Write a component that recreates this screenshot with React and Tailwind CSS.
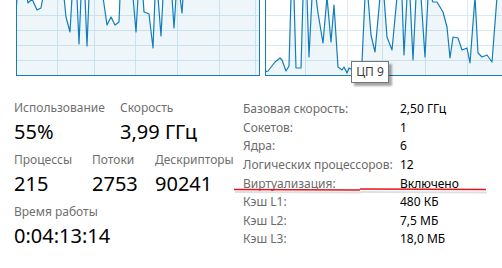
import React from 'react'

const graphOne = [
  [16, 15], [17, -3], [27, -3], [28, 3], [32, -1], [37, 10], [41, 8], [43, -3],
  [64, -3], [66, 17], [70, 32], [72, -3],
  [77, -3], [79, 44], [81, -3],
  [85, -3], [87, 46], [89, -3],
  [103, -3], [107, 25], [111, 17], [115, 25], [119, 22], [120, -3],
  [133, -3], [136, 32], [138, -3],
  [143, -3], [144, 12], [147, 13], [149, 14], [153, 48], [155, -3],
  [158, -3], [161, 36], [163, -3],
  [172, -3], [174, 28], [176, -3],
  [180, -3], [182, 13], [183, -3],
  [260, -3],
]

const graphTwo = [
  [265, 72], [268, 71], [275, 62], [280, 58], [282, 60], [286, 71], [289, 66], [291, -3],
  [294, -3], [296, 68], [301, 68], [303, -3], [307, -3], [309, 57], [312, -3],
  [316, -3], [318, 13], [323, 43], [327, -3], [331, 42], [334, 5], [338, 67],
  [342, 70], [344, 67], [347, 73], [349, 68], [354, 71], [358, 66], [362, 62], [365, -3],
  [368, -3], [371, 35], [375, 52], [380, -3], [384, -3], [387, 37], [392, 50], [397, -3],
  [402, -3], [404, 55], [407, -3], [410, -3], [413, 60], [416, -3], [421, -3], [425, 57],
  [428, -3], [431, -3], [433, 2], [437, 2], [443, 12], [447, 27], [450, 58], [453, 37],
  [458, 38], [462, 50], [467, 48], [470, 63], [475, -3], [478, 53], [482, 57], [487, 55],
  [492, 62], [497, -3], [502, -3],
]

const Graph = ({ x, width, points, vLines, rightBorder }) => {
  const line = points.map((p) => p.join(',')).join(' ')
  const area = `${points[0][0]},75 ${line} ${points[points.length - 1][0]},75`
  return (
    <svg width={width} height="76" viewBox={`${x} 0 ${width} 76`} className="block shrink-0">
      <rect x={x} y="0" width={width} height="76" fill="#ffffff" />
      {[15, 30, 45, 60].map((y) => (
        <line key={y} x1={x} x2={x + width} y1={y + 0.5} y2={y + 0.5} stroke="#d9eaf4" />
      ))}
      {vLines.map((v) => (
        <line key={v} x1={v + 0.5} x2={v + 0.5} y1="0" y2="75" stroke="#d9eaf4" />
      ))}
      <polygon points={area} fill="#117dbb" fillOpacity="0.07" />
      <polyline points={line} fill="none" stroke="#117dbb" strokeWidth="1.2" strokeLinejoin="round" />
      <line x1={x + 0.5} x2={x + 0.5} y1="0" y2="76" stroke="#117dbb" />
      {rightBorder && <line x1={x + width - 0.5} x2={x + width - 0.5} y1="0" y2="76" stroke="#117dbb" />}
      <line x1={x} x2={x + width} y1="75.5" y2="75.5" stroke="#117dbb" />
    </svg>
  )
}

const Stat = ({ label, value, className = '' }) => (
  <div className={className}>
    <div className="text-[12px] leading-[16px] text-[#6f6f6f]">{label}</div>
    <div className="mt-[3px] text-[20px] leading-[26px] text-black">{value}</div>
  </div>
)

const specs = [
  ['Базовая скорость:', '2,50 ГГц'],
  ['Сокетов:', '1'],
  ['Ядра:', '6'],
  ['Логических процессоров:', '12'],
  ['Виртуализация:', 'Включено'],
  ['Кэш L1:', '480 КБ'],
  ['Кэш L2:', '7,5 МБ'],
  ['Кэш L3:', '18,0 МБ'],
]

export default function App() {
  return (
    <div className="relative w-[502px] h-[268px] overflow-hidden bg-white font-['Noto_Sans',sans-serif]">
      {/* CPU graphs */}
      <div className="flex h-[76px]">
        <div className="ml-[16px]">
          <Graph x={16} width={244} points={graphOne} vLines={[57, 94, 135, 177, 219, 255]} rightBorder />
        </div>
        <div className="ml-[5px]">
          <Graph x={265} width={237} points={graphTwo} vLines={[305, 347, 382, 425, 467]} />
        </div>
      </div>

      <div className="flex pt-[24px]">
        <div className="w-[243px] pl-[14px]">
          <div className="flex">
            <Stat className="w-[106px]" label="Использование" value="55%" />
            <Stat label="Скорость" value="3,99 ГГц" />
          </div>
          <div className="mt-[7px] flex">
            <Stat className="w-[78px]" label="Процессы" value="215" />
            <Stat className="w-[63px]" label="Потоки" value="2753" />
            <Stat label="Дескрипторы" value="90241" />
          </div>
          <Stat className="mt-[7px]" label="Время работы" value="0:04:13:14" />
        </div>

        <div className="grid grid-cols-[157px_auto] text-[12px] leading-[18px]">
          {specs.map(([k, v]) => (
            <React.Fragment key={k}>
              <div className="text-[#6b6b6b]">{k}</div>
              <div className="text-black">{v}</div>
            </React.Fragment>
          ))}
        </div>
      </div>

      {/* tooltip */}
      <div className="absolute left-[351px] top-[61px] flex h-[22px] w-[38px] items-center justify-center border border-[#767676] bg-white text-[12px] text-[#3c3c3c] shadow-[3px_3px_2px_rgba(0,0,0,0.35)]">
        ЦП 9
      </div>

      {/* red underline */}
      <svg className="absolute left-0 top-0" width="502" height="268">
        <path d="M234 190 L360 190.5" stroke="#000" strokeOpacity="0.12" strokeWidth="2" fill="none" transform="translate(1 2)" />
        <path d="M360 190 L486 190.5" stroke="#000" strokeOpacity="0.12" strokeWidth="2" fill="none" transform="translate(1 2)" />
        <path d="M234 189.5 L360 190" stroke="#e5131d" strokeWidth="1.6" fill="none" />
        <path d="M360 189 L486 189.5" stroke="#e5131d" strokeWidth="1.6" fill="none" />
      </svg>
    </div>
  )
}
